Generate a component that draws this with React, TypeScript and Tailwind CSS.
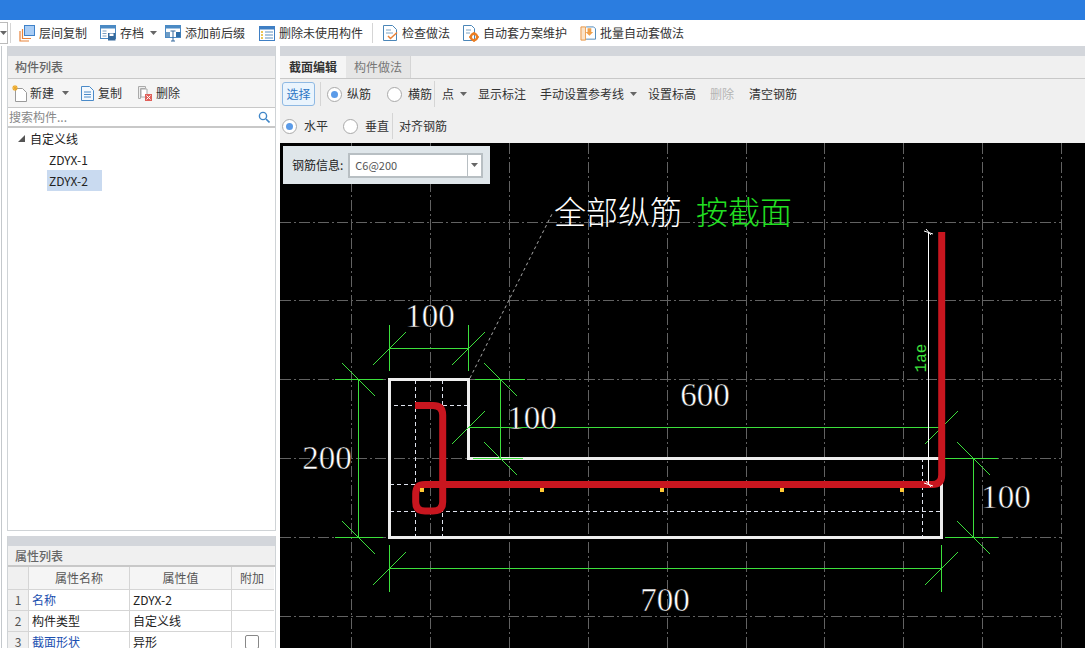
import type { ReactNode } from 'react';

const uiFont = { fontFamily: '"Noto Sans CJK SC", "Liberation Sans", sans-serif' };
const green = '#3ce03c';

const Caret = () => (
  <svg width="7" height="4" viewBox="0 0 7 4" className="shrink-0">
    <path d="M0 0h7L3.5 4z" fill="#666" />
  </svg>
);

const Sep = ({ className = '' }: { className?: string }) => <div className={`w-px bg-[#d5d5d5] ${className}`} />;

const Radio = ({ on = false }: { on?: boolean }) => (
  <span className="w-[15px] h-[15px] rounded-full border border-[#a9a9a9] bg-white flex items-center justify-center shrink-0">
    {on && <span className="w-[7px] h-[7px] rounded-full bg-[#5b9be8]" />}
  </span>
);

// toolbar icons, drawn by hand
const IconCopyFloor = () => (
  <svg width="16" height="17" viewBox="0 0 16 17">
    <path d="M1 6v10h9M3.5 4v9.5H12" fill="none" stroke="#e8833a" strokeWidth="1.2" />
    <rect x="5.5" y="0.5" width="10" height="10" fill="#a9cdf5" stroke="#3f82c9" />
  </svg>
);
const IconArchive = () => (
  <svg width="16" height="16" viewBox="0 0 16 16">
    <rect x="0.5" y="0.5" width="15" height="13" fill="#fff" stroke="#4b8ac4" />
    <rect x="0.5" y="0.5" width="15" height="3" fill="#4b8ac4" />
    <path d="M2.5 6h4M2.5 8.5h4M2.5 11h4" stroke="#7d9fc0" />
    <rect x="8" y="8" width="7.5" height="7.5" fill="#35699c" />
    <rect x="9.5" y="8.5" width="4" height="2.5" fill="#fff" />
  </svg>
);
const IconPrefix = () => (
  <svg width="16" height="17" viewBox="0 0 16 17">
    <rect x="0.5" y="0.5" width="15" height="12" fill="#fff" stroke="#4b8ac4" />
    <rect x="0.5" y="0.5" width="15" height="3" fill="#4b8ac4" />
    <rect x="1" y="7" width="4" height="5" fill="#6d9cc6" />
    <rect x="11" y="7" width="4.5" height="5" fill="#2f6ea8" />
    <path d="M5.5 6h5M8 6v10M6 16h4" stroke="#35699c" fill="none" />
  </svg>
);
const IconList = () => (
  <svg width="16" height="15" viewBox="0 0 16 15">
    <rect x="0.5" y="0.5" width="15" height="14" fill="#fff" stroke="#3f7fc4" />
    <rect x="0.5" y="0.5" width="15" height="3" fill="#3f7fc4" />
    <path d="M2 6h2M2 9h2M2 12h2" stroke="#e6b422" strokeWidth="1.5" />
    <path d="M6 6h8M6 9h8M6 12h8" stroke="#5d8fbe" />
  </svg>
);
const IconCheck = () => (
  <svg width="15" height="16" viewBox="0 0 15 16">
    <path d="M0.5 0.5h9l4 4v11H0.5z" fill="#fff" stroke="#4b86b8" />
    <path d="M3 5h5M3 8h7" stroke="#7fa4c4" />
    <path d="M5 11l2.5 2.5L14 7.5" fill="none" stroke="#e8833a" strokeWidth="1.5" />
  </svg>
);
const IconGearDoc = () => (
  <svg width="16" height="17" viewBox="0 0 16 17">
    <path d="M0.5 0.5h8l3 3v12H0.5z" fill="#fff" stroke="#4b86b8" />
    <path d="M3 5h5M3 8h4" stroke="#7fa4c4" />
    <circle cx="11" cy="12" r="3.2" fill="none" stroke="#ea7d22" strokeWidth="2.4" />
    <path d="M11 7v2M11 15v2M6 12h2M14 12h2" stroke="#ea7d22" strokeWidth="1.4" />
  </svg>
);
const IconBatch = () => (
  <svg width="17" height="17" viewBox="0 0 17 17">
    <path d="M1 1.5h5v14H1z" fill="#fbe3c8" stroke="#e8933f" />
    <path d="M6.5 1.5h8l2 2v11h-10" fill="#fff" stroke="#4b86b8" />
    <path d="M8 3h4v4h2l-4 4-4-4h2z" fill="#f0a04a" />
  </svg>
);
const IconNew = () => (
  <svg width="16" height="17" viewBox="0 0 16 17">
    <path d="M3.5 3.5h7l4 4v9h-11z" fill="#fff" stroke="#9a9a9a" />
    <path d="M3 0v6M0 3h6M1 1l4 4M5 1L1 5" stroke="#eda928" strokeWidth="1.1" />
  </svg>
);
const IconCopy = () => (
  <svg width="13" height="15" viewBox="0 0 13 15">
    <path d="M0.5 0.5h8l4 4v10H0.5z" fill="#f3f8fd" stroke="#4a8ac8" />
    <path d="M3 6h7M3 8.5h7M3 11h7" stroke="#4a8ac8" />
  </svg>
);
const IconDelete = () => (
  <svg width="14" height="15" viewBox="0 0 14 15">
    <path d="M0.5 0.5h7v2h-5v10h-2z" fill="#eee" stroke="#aaa" />
    <path d="M3 3h6v8H3z" fill="#fff" stroke="#aaa" />
    <rect x="7" y="8" width="7" height="7" fill="#e0605a" />
    <path d="M8.5 9.5l4 4M12.5 9.5l-4 4" stroke="#fff" />
  </svg>
);

const ToolItem = ({ icon, label, caret, className = '' }: { icon: ReactNode; label: string; caret?: boolean; className?: string }) => (
  <div className={`flex items-center ${className}`}>
    <span className="w-[16px] flex justify-center">{icon}</span>
    <span className="ml-[4px]">{label}</span>
    {caret && <span className="ml-[6px]"><Caret /></span>}
  </div>
);

// cad drawing data
const gridX = [351, 430, 509, 588, 667, 746, 824, 903, 982, 1061];
const gridY = [222.5, 300.5, 379.5, 458.5, 537.5, 616.5];

const Tick = ({ x, y, back }: { x: number; y: number; back?: boolean }) => (
  <line x1={x - 16.5} y1={back ? y - 16.5 : y + 16.5} x2={x + 16.5} y2={back ? y + 16.5 : y - 16.5} stroke={green} strokeWidth="1" />
);

const Dim = ({ x, y, children }: { x: number; y: number; children: string }) => (
  <text x={x} y={y} textAnchor="middle" fill="#ffffff" stroke="#000" strokeWidth="0.5" fontSize="33" fontFamily='"Liberation Serif", serif'>
    {children}
  </text>
);

const Drawing = () => (
  <svg viewBox="280 143 805 505" className="w-full h-full block">
    {gridX.map((x) => (
      <line key={x} x1={x + 0.5} y1="143" x2={x + 0.5} y2="648" stroke="#626262" strokeDasharray="11 3 2 3" />
    ))}
    {gridY.map((y) => (
      <line key={y} x1="280" y1={y} x2="1061" y2={y} stroke="#626262" strokeDasharray="11 3 2 3" />
    ))}

    {/* stirrup guide lines */}
    <g stroke="#dfe3ee" strokeDasharray="4 3" strokeWidth="1">
      <line x1="415.5" y1="380" x2="415.5" y2="537" />
      <line x1="442.5" y1="380" x2="442.5" y2="537" />
      <line x1="922.5" y1="458" x2="922.5" y2="537" />
      <line x1="394" y1="405.5" x2="468" y2="405.5" />
      <line x1="390" y1="484.5" x2="940" y2="484.5" />
      <line x1="390" y1="511.5" x2="940" y2="511.5" />
    </g>

    <path d="M389.5 379.5H468.5V458.5H941.5V537.5H389.5Z" fill="none" stroke="#eeeeee" strokeWidth="3" />

    <line x1="470" y1="378" x2="552" y2="214" stroke="#aaa" strokeDasharray="3 3" />

    {/* dimensions */}
    <g stroke={green} strokeWidth="1" fill="none">
      <path d="M389.5 348.5H468.5M389.5 325V371M468.5 325V371" />
      <path d="M358.5 379.5V537.5M335 379.5H383M335 537.5H383" />
      <path d="M500.5 379.5V458.5M475 379.5H525M473 458.5H523" />
      <path d="M468.5 427.5H941M389.5 568.5H941.5M389.5 545V592M941.5 545V592" />
      <path d="M973.5 458.5V537.5M945 458.5H998M945 537.5H998" />
    </g>
    <Tick x={389.5} y={348.5} />
    <Tick x={468.5} y={348.5} />
    <Tick x={358.5} y={379.5} back />
    <Tick x={358.5} y={537.5} back />
    <Tick x={500.5} y={379.5} back />
    <Tick x={500.5} y={458.5} back />
    <Tick x={468.5} y={427.5} />
    <Tick x={389.5} y={568.5} />
    <Tick x={941.5} y={568.5} />
    <Tick x={973.5} y={458.5} back />
    <Tick x={973.5} y={537.5} back />
    <Tick x={941.5} y={427.5} />

    {/* rebar */}
    <path
      d="M415 405.5H433Q442.7 405.5 442.7 415V502Q442.7 511 433 511H425Q415.7 511 415.7 502V494Q415.7 484.5 425 484.5H932Q941.7 484.5 941.7 475V232"
      fill="none"
      stroke="#c8161f"
      strokeWidth="7"
    />
    {[420, 540, 660, 780, 900].map((x) => (
      <rect key={x} x={x} y="488" width="4" height="4" fill="#ffc933" />
    ))}

    <path d="M928.5 232V484M924 231l9 3M926 229l5 6M924 483l9 3M926 481l5 6" stroke="#fff" strokeWidth="1" fill="none" />
    <text x="926" y="358" textAnchor="middle" fill={green} fontSize="16" fontFamily='"Liberation Mono", monospace' transform="rotate(-90 926 358)">
      1ae
    </text>

    <Dim x={430} y={327}>100</Dim>
    <Dim x={327} y={469}>200</Dim>
    <Dim x={532} y={429}>100</Dim>
    <Dim x={705} y={406}>600</Dim>
    <Dim x={665} y={611}>700</Dim>
    <Dim x={1006} y={508}>100</Dim>

    <text x="554" y="224" fontSize="32" fontWeight="300" fontFamily='"Noto Sans CJK SC", sans-serif' fill="#fff">全部纵筋</text>
    <text x="696" y="224" fontSize="32" fontWeight="300" fontFamily='"Noto Sans CJK SC", sans-serif' fill="#22e022">按截面</text>
  </svg>
);

const rows = [
  { n: 1, name: '名称', value: 'ZDYX-2', link: true },
  { n: 2, name: '构件类型', value: '自定义线', link: false },
  { n: 3, name: '截面形状', value: '异形', link: true, check: true },
];

function App() {
  return (
    <div className="w-[1085px] h-[648px] overflow-hidden bg-white flex flex-col text-[12px] text-[#333]" style={uiFont}>
      <div className="h-[20px] bg-[#2b7de0] shrink-0" />

      {/* main toolbar */}
      <div className="h-[26px] shrink-0 flex items-center bg-white">
        <div className="w-[8px] h-[22px] border border-l-0 border-[#bbb] flex items-center justify-center">
          <Caret />
        </div>
        <Sep className="h-[20px] ml-[2px]" />
        <ToolItem icon={<IconCopyFloor />} label="层间复制" className="ml-[8px]" />
        <ToolItem icon={<IconArchive />} label="存档" caret className="ml-[13px]" />
        <ToolItem icon={<IconPrefix />} label="添加前后缀" className="ml-[8px]" />
        <ToolItem icon={<IconList />} label="删除未使用构件" className="ml-[14px]" />
        <Sep className="h-[20px] ml-[9px]" />
        <ToolItem icon={<IconCheck />} label="检查做法" className="ml-[9px]" />
        <ToolItem icon={<IconGearDoc />} label="自动套方案维护" className="ml-[13px]" />
        <ToolItem icon={<IconBatch />} label="批量自动套做法" className="ml-[13px]" />
      </div>

      <div className="flex-1 min-h-0 flex">
        {/* thin strip left of the panels */}
        <div className="w-[7px] shrink-0 flex">
          <div className="ml-[1px] w-px bg-[#c4c8cc]" />
        </div>

        {/* left column */}
        <div className="w-[269px] shrink-0 flex flex-col">
          <div className="h-[485px] shrink-0 flex flex-col border-r border-b border-l border-[#cfd3d6]">
            <div className="h-[10px] bg-[#d3d6db] shrink-0" />
            <div className="h-[23px] bg-[#f0f0f0] border-b border-[#c8c8c8] flex items-center pl-[7px] text-[#666] font-medium shrink-0">构件列表</div>
            <div className="h-[29px] bg-[#f5f5f5] border-b border-[#c8c8c8] flex items-center pl-[4px] shrink-0">
              <IconNew />
              <span className="ml-[2px]">新建</span>
              <span className="ml-[8px]"><Caret /></span>
              <span className="ml-[12px]"><IconCopy /></span>
              <span className="ml-[4px]">复制</span>
              <span className="ml-[16px]"><IconDelete /></span>
              <span className="ml-[4px]">删除</span>
            </div>
            <div className="h-[20px] border-b-2 border-[#c8c8c8] flex items-center pl-[1px] pr-[5px] justify-between text-[#888] shrink-0">
              <span>搜索构件...</span>
              <svg width="12" height="12" viewBox="0 0 12 12">
                <circle cx="5" cy="5" r="3.6" fill="none" stroke="#3f86c8" strokeWidth="1.4" />
                <path d="M8 8l3.5 3.5" stroke="#3f86c8" strokeWidth="1.6" />
              </svg>
            </div>
            <div className="flex-1 text-[#222]">
              <div className="h-[21px] flex items-center pl-[10px]">
                <svg width="7" height="7" viewBox="0 0 7 7"><path d="M7 0v7H0z" fill="#555" /></svg>
                <span className="ml-[5px]">自定义线</span>
              </div>
              <div className="h-[21px] flex items-center pl-[41px]">ZDYX-1</div>
              <div className="h-[21px] flex items-center pl-[39px]">
                <span className="h-[21px] px-[2px] w-[55px] bg-[#c9daf0] flex items-center">ZDYX-2</span>
              </div>
            </div>
          </div>

          <div className="mt-[5px] flex-1 flex flex-col border-l border-r border-[#cfd3d6]">
            <div className="h-[10px] bg-[#d3d6db] shrink-0" />
            <div className="h-[21px] bg-[#f0f0f0] border-b-2 border-[#c8c8c8] flex items-center pl-[7px] text-[#666] font-medium shrink-0">属性列表</div>
            <div className="grid grid-cols-[21px_101px_102px_42px] grid-rows-[23px_21px_21px_21px]">
              <div className="bg-[#f0f0f0] border-r border-b border-[#d5d5d5]" />
              <div className="bg-[#f5f5f5] border-r border-b border-[#d5d5d5] flex items-center justify-center text-[#555]">属性名称</div>
              <div className="bg-[#f5f5f5] border-r border-b border-[#d5d5d5] flex items-center justify-center text-[#555]">属性值</div>
              <div className="bg-[#f5f5f5] border-b border-[#d5d5d5] flex items-center justify-center text-[#555] pr-[2px]">附加</div>
              {rows.map((r) => (
                <div key={r.n} className="contents">
                  <div className="bg-[#f0f0f0] border-r border-b border-[#d5d5d5] flex items-center justify-center text-[#555]">{r.n}</div>
                  <div className={`border-r border-b border-[#d5d5d5] flex items-center pl-[3px] ${r.link ? 'text-[#1a4fb0]' : 'text-[#222]'}`}>{r.name}</div>
                  <div className="border-r border-b border-[#d5d5d5] flex items-center pl-[3px] text-[#222]">{r.value}</div>
                  <div className="border-b border-[#d5d5d5] flex items-center justify-center pr-[2px]">
                    {r.check && <span className="w-[14px] h-[14px] rounded-[2px] border border-[#888] bg-white" />}
                  </div>
                </div>
              ))}
            </div>
          </div>
        </div>

        {/* right column */}
        <div className="flex-1 min-w-0 ml-[4px] flex flex-col">
          <div className="h-[10px] bg-[#d3d6db] shrink-0" />
          <div className="h-[23px] bg-[#f0f0f0] border-b border-[#c8c8c8] flex items-stretch shrink-0">
            <div className="w-[66px] flex items-center justify-center font-bold text-[#333] bg-[#f5f5f5]">截面编辑</div>
            <div className="w-[65px] flex items-center justify-center text-[#777] bg-[#e6e6e6] border-r border-[#d5d5d5]">构件做法</div>
          </div>
          <div className="h-[30px] bg-[#f0f0f0] flex items-center pl-[2px] shrink-0">
            <div className="w-[33px] h-[24px] rounded-[3px] border border-[#8fb9e3] bg-[#eaf4fd] text-[#2f77c4] flex items-center justify-center">选择</div>
            <Sep className="h-[24px] ml-[5px]" />
            <span className="ml-[6px]"><Radio on /></span>
            <span className="ml-[5px]">纵筋</span>
            <span className="ml-[16px]"><Radio /></span>
            <span className="ml-[6px]">横筋</span>
            <Sep className="h-[26px] ml-[2px]" />
            <span className="ml-[7px]">点</span>
            <span className="ml-[6px]"><Caret /></span>
            <span className="ml-[11px]">显示标注</span>
            <span className="ml-[14px]">手动设置参考线</span>
            <span className="ml-[6px]"><Caret /></span>
            <span className="ml-[11px]">设置标高</span>
            <span className="ml-[14px] text-[#b5b5b5]">删除</span>
            <span className="ml-[15px]">清空钢筋</span>
          </div>
          <div className="h-[34px] bg-[#f0f0f0] flex items-center pl-[2px] shrink-0">
            <Radio on />
            <span className="ml-[7px]">水平</span>
            <span className="ml-[15px]"><Radio /></span>
            <span className="ml-[7px]">垂直</span>
            <Sep className="h-[26px] ml-[3px]" />
            <span className="ml-[6px]">对齐钢筋</span>
          </div>

          <div className="flex-1 min-h-0 relative bg-black">
            <Drawing />
            <div className="absolute left-[3px] top-[3px] w-[207px] h-[38px] bg-[#dfe6ea] flex items-center pl-[9px]">
              <span className="text-[#222]">钢筋信息:</span>
              <div className="ml-[5px] w-[135px] h-[25px] border-2 border-[#b8bfc3] bg-white flex items-stretch">
                <span className="flex-1 flex items-center pl-[5px] text-[#555] text-[11px]">C6@200</span>
                <span className="w-[14px] border-l border-[#b8bfc3] flex items-center justify-center"><Caret /></span>
              </div>
            </div>
          </div>
        </div>
      </div>
    </div>
  );
}

export default App;
